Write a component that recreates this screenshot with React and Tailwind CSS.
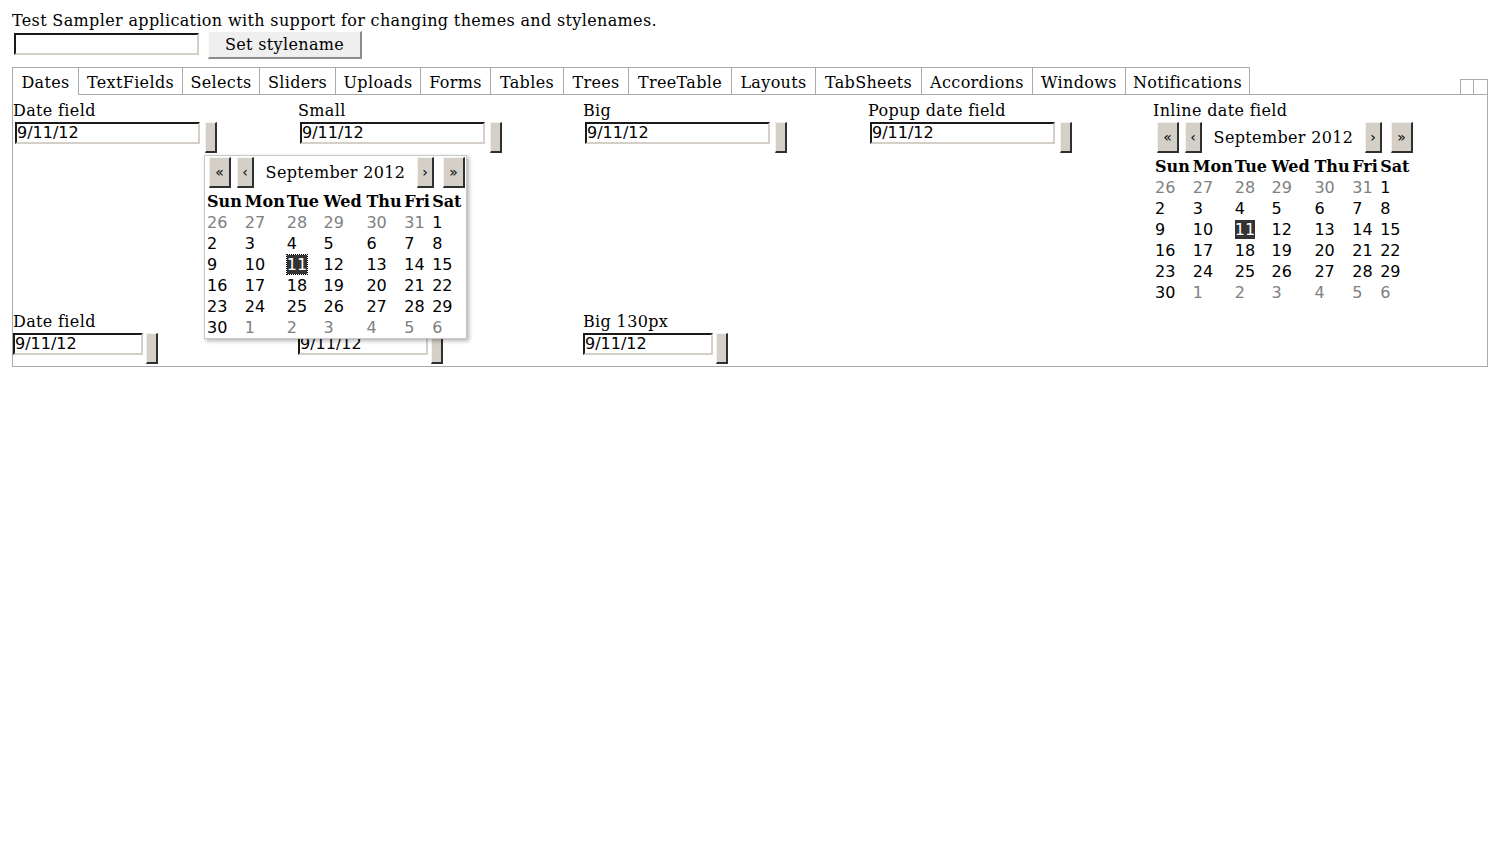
import React from "react";

const tabs = [
    ["Dates", "w-[67px]"],
    ["TextFields", "w-[104px]"],
    ["Selects", "w-[77px]"],
    ["Sliders", "w-[76px]"],
    ["Uploads", "w-[85px]"],
    ["Forms", "w-[70px]"],
    ["Tables", "w-[73px]"],
    ["Trees", "w-[65px]"],
    ["TreeTable", "w-[103px]"],
    ["Layouts", "w-[84px]"],
    ["TabSheets", "w-[106px]"],
    ["Accordions", "w-[111px]"],
    ["Windows", "w-[93px]"],
    ["Notifications", "w-[124px]"],
];

const weekdays = ["Sun", "Mon", "Tue", "Wed", "Thu", "Fri", "Sat"];
const colWidths = ["w-[38px]", "w-[42px]", "w-[37px]", "w-[43px]", "w-[38px]", "w-[28px]", "w-[33px]"];

const weeks = [
    [26, 27, 28, 29, 30, 31, 1],
    [2, 3, 4, 5, 6, 7, 8],
    [9, 10, 11, 12, 13, 14, 15],
    [16, 17, 18, 19, 20, 21, 22],
    [23, 24, 25, 26, 27, 28, 29],
    [30, 1, 2, 3, 4, 5, 6],
];

function isOther(weekIndex, day) {
    return (weekIndex === 0 && day > 7) || (weekIndex === 5 && day < 20);
}

function NavButton({ children, wide }) {
    return (
        <div
            className={`${wide ? "w-[22px]" : "w-[17px]"} flex h-[31px] items-end justify-center border-t border-l border-t-[#f4f2ee] border-l-[#f4f2ee] border-r-2 border-b-2 border-r-[#303030] border-b-[#303030] bg-[#d4d0c8] pb-[7px] text-[14px] leading-[14px] tracking-normal font-['DejaVu_Sans',sans-serif]`}
        >
            {children}
        </div>
    );
}

function Calendar({ focused }) {
    return (
        <div className="w-[258px]">
            <div className="flex h-[34px] items-start">
                <div className="ml-[2px]">
                    <NavButton wide>«</NavButton>
                </div>
                <div className="ml-[6px]">
                    <NavButton>‹</NavButton>
                </div>
                <div className="flex h-[31px] flex-1 items-center justify-center">September 2012</div>
                <NavButton>›</NavButton>
                <div className="ml-[9px]">
                    <NavButton wide>»</NavButton>
                </div>
            </div>
            <div className="flex h-[21px] items-center font-bold tracking-normal">
                {weekdays.map((d, i) => (
                    <div key={d} className={colWidths[i]}>
                        {d}
                    </div>
                ))}
            </div>
            {weeks.map((week, wi) => (
                <div
                    key={wi}
                    className="flex h-[21px] items-center tracking-normal font-['DejaVu_Sans',sans-serif]"
                >
                    {week.map((day, i) => {
                        const selected = wi === 2 && day === 11;
                        return (
                            <div key={i} className={colWidths[i]}>
                                <span
                                    className={
                                        selected
                                            ? `bg-[#333] text-white ${focused ? "outline-1 outline-dotted outline-black" : ""}`
                                            : isOther(wi, day)
                                              ? "text-[#808080]"
                                              : ""
                                    }
                                >
                                    {day}
                                </span>
                            </div>
                        );
                    })}
                </div>
            ))}
        </div>
    );
}

function DateInput({ wide }) {
    return (
        <div className={`flex items-start ${wide ? "ml-[2px]" : ""}`}>
            <div
                className={`${wide ? "w-[185px]" : "w-[130px]"} h-[22px] border-t-2 border-l-2 border-t-[#1a1a1a] border-l-[#1a1a1a] border-r-2 border-b-2 border-r-[#d4d0c8] border-b-[#d4d0c8] bg-white text-[16px] leading-[18px] tracking-normal font-['DejaVu_Sans',sans-serif]`}
            >
                9/11/12
            </div>
            <div
                className={`${wide ? "ml-[5px]" : "ml-[3px]"} h-[31px] w-[12px] border-t border-l border-t-[#f4f2ee] border-l-[#f4f2ee] border-r-2 border-b-2 border-r-[#303030] border-b-[#303030] bg-[#d4d0c8]`}
            />
        </div>
    );
}

function Field({ caption, wide = true, children }) {
    return (
        <div className="relative">
            <div className="h-[19px] leading-[19px]">{caption}</div>
            <div className="mt-[2px]">{children ?? <DateInput wide={wide} />}</div>
        </div>
    );
}

export default function App() {
    return (
        <div className="min-h-screen bg-white px-3 pt-[11px] text-[16px] tracking-[0.35px] text-black font-['DejaVu_Serif',serif]">
            <div className="leading-[19px]">
                Test Sampler application with support for changing themes and stylenames.
            </div>
            <div className="mt-[1px] flex items-start">
                <div className="mt-[2px] ml-[2px] h-[22px] w-[185px] border-t-2 border-l-2 border-t-[#1a1a1a] border-l-[#1a1a1a] border-r-2 border-b-2 border-r-[#d4d0c8] border-b-[#d4d0c8] bg-white" />
                <button className="ml-[9px] h-[28px] w-[154px] border border-t-white border-l-[#fafafa] border-r-2 border-b-2 border-r-[#8c8c8c] border-b-[#8c8c8c] bg-[#efefef] leading-[24px]">
                    Set stylename
                </button>
            </div>

            <div className="mt-[8px] flex items-end">
                <div className="flex">
                    {tabs.map(([t, w], i) => (
                        <div
                            key={t}
                            className={`${w} flex h-[28px] items-center justify-center border-t border-r border-[#aaa] pt-[2px] leading-[19px] ${i === 0 ? "border-l border-b-0" : "border-b"}`}
                        >
                            {t}
                        </div>
                    ))}
                </div>
                <div className="h-[1px] flex-1 bg-[#aaa]" />
                <div className="flex">
                    <div className="h-[16px] w-[14px] border border-[#aaa]" />
                    <div className="h-[16px] w-[14px] border border-l-0 border-[#aaa]" />
                </div>
            </div>

            <div className="h-[272px] border-r border-b border-l border-[#aaa] pt-[6px]">
                <div className="grid grid-cols-[285px_285px_285px_285px_285px]">
                    <div className="relative">
                        <Field caption="Date field" />
                        <div className="absolute top-[54px] left-[191px] z-10 border border-[#c8c8c8] bg-white pt-[1px] pr-[1px] pl-[2px] shadow-[2px_2px_4px_rgba(0,0,0,0.3)]">
                            <Calendar focused />
                        </div>
                    </div>
                    <Field caption="Small" />
                    <Field caption="Big" />
                    <Field caption="Popup date field" />
                    <Field caption="Inline date field">
                        <div className="ml-[2px]">
                            <Calendar />
                        </div>
                    </Field>
                </div>
                <div className="mt-[9px] grid grid-cols-[285px_285px_285px_285px_285px]">
                    <Field caption="Date field" wide={false} />
                    <Field caption="Small 130px" wide={false} />
                    <Field caption="Big 130px" wide={false} />
                </div>
            </div>
        </div>
    );
}
